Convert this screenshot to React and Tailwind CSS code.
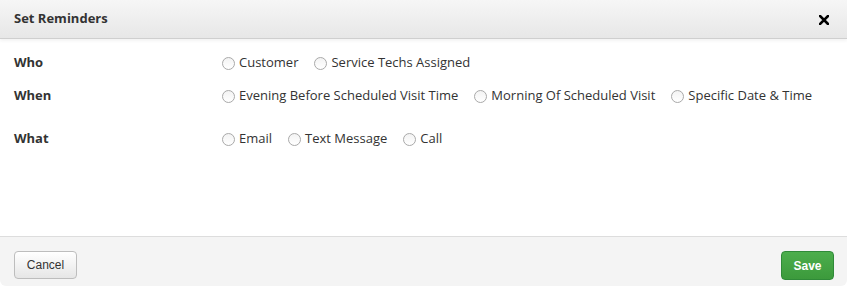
import React from "react";

const rows = [
  { label: "Who", options: ["Customer", "Service Techs Assigned"], cls: "h-[20px] mt-[14px]" },
  {
    label: "When",
    options: ["Evening Before Scheduled Visit Time", "Morning Of Scheduled Visit", "Specific Date & Time"],
    cls: "h-[20px] mt-[13px]",
  },
  { label: "What", options: ["Email", "Text Message", "Call"], cls: "h-[20px] mt-[23px]" },
];

function Radio({ label }) {
  return (
    <label className="flex items-center gap-[4px] cursor-pointer">
      <span className="w-[13px] h-[13px] rounded-full border border-[#a9a9a9] bg-gradient-to-b from-[#f3f3f3] to-white" />
      <span>{label}</span>
    </label>
  );
}

export default function App() {
  return (
    <div
      className="w-[847px] h-[300px] bg-white text-[#333] text-[13px]"
      style={{ fontFamily: '"Open Sans", "Noto Sans", sans-serif' }}
    >
      <div className="h-[286px] flex flex-col rounded-b-[6px] overflow-hidden">
        {/* Header */}
        <div className="h-[39px] flex items-center justify-between px-[14px] bg-gradient-to-b from-[#f6f6f6] to-[#e7e7e7] border-b border-[#cfcfcf] shadow-[0_2px_3px_rgba(0,0,0,0.05)]">
          <h3 className="font-bold text-[13px]">Set Reminders</h3>
          <button className="mr-[4px] mt-[2px]">
            <svg width="10" height="10" viewBox="0 0 10 10">
              <path d="M1 1 L9 9 M9 1 L1 9" stroke="#000" strokeWidth="2.6" strokeLinecap="square" />
            </svg>
          </button>
        </div>

        {/* Body */}
        <div className="flex-1 px-[14px]">
          {rows.map((r) => (
            <div key={r.label} className={`flex items-center ${r.cls}`}>
              <div className="w-[208px] font-bold">{r.label}</div>
              <div className="flex items-center gap-[16px]">
                {r.options.map((o) => (
                  <Radio key={o} label={o} />
                ))}
              </div>
            </div>
          ))}
        </div>

        {/* Footer */}
        <div
          className="h-[50px] flex items-start justify-between pt-[14px] pl-[14px] pr-[13px] bg-[#f4f4f4] border-t border-[#dddddd]"
          style={{ fontFamily: '"Liberation Sans", Arial, sans-serif' }}
        >
          <button className="h-[28px] w-[63px] text-[12px] text-[#333] rounded-[4px] border border-[#bdbdbd] bg-gradient-to-b from-white to-[#e6e6e6] shadow-[inset_0_1px_0_rgba(255,255,255,0.6)]">
            Cancel
          </button>
          <button className="h-[29px] w-[53px] text-[12px] font-bold text-white rounded-[4px] border border-[#2f8a38] bg-gradient-to-b from-[#4cae4c] to-[#3c9a3c]">
            Save
          </button>
        </div>
      </div>
    </div>
  );
}
